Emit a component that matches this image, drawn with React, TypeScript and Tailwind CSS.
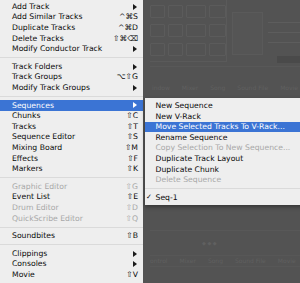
import React from "react";

type Item =
  | { label: string; sc?: string; arrow?: boolean; disabled?: boolean; hl?: boolean; check?: boolean }
  | "sep";

const mainItems: Item[] = [
  { label: "Add Track", arrow: true },
  { label: "Add Similar Tracks", sc: "^⌘S" },
  { label: "Duplicate Tracks", sc: "^⌘D" },
  { label: "Delete Tracks", sc: "⇧⌘⌫" },
  { label: "Modify Conductor Track", arrow: true },
  "sep",
  { label: "Track Folders", arrow: true },
  { label: "Track Groups", sc: "⌥⇧G" },
  { label: "Modify Track Groups", arrow: true },
  "sep",
  { label: "Sequences", arrow: true, hl: true },
  { label: "Chunks", sc: "⇧C" },
  { label: "Tracks", sc: "⇧T" },
  { label: "Sequence Editor", sc: "⇧S" },
  { label: "Mixing Board", sc: "⇧M" },
  { label: "Effects", sc: "⇧F" },
  { label: "Markers", sc: "⇧K" },
  "sep",
  { label: "Graphic Editor", sc: "⇧G", disabled: true },
  { label: "Event List", sc: "⇧E" },
  { label: "Drum Editor", sc: "⇧D", disabled: true },
  { label: "QuickScribe Editor", sc: "⇧Q", disabled: true },
  "sep",
  { label: "Soundbites", sc: "⇧B" },
  "sep",
  { label: "Clippings", arrow: true },
  { label: "Consoles", arrow: true },
  { label: "Movie", sc: "⇧V" },
];

const subItems: Item[] = [
  { label: "New Sequence" },
  { label: "New V-Rack" },
  { label: "Move Selected Tracks To V-Rack...", hl: true },
  { label: "Rename Sequence" },
  { label: "Copy Selection To New Sequence...", disabled: true },
  { label: "Duplicate Track Layout" },
  { label: "Duplicate Chunk" },
  { label: "Delete Sequence", disabled: true },
  "sep",
  { label: "Seq-1", check: true },
];

function Arrow({ white }: { white?: boolean }) {
  return (
    <svg width="4" height="6" viewBox="0 0 4 6" className="mr-[1px]">
      <path d="M0 0 L4 3 L0 6 Z" fill={white ? "#ffffff" : "#1a1a1a"} />
    </svg>
  );
}

function Sep() {
  return (
    <div className="h-[7px] flex items-center">
      <div className="h-px w-full bg-[#dadada]" />
    </div>
  );
}

function MainRow({ it }: { it: Exclude<Item, "sep"> }) {
  const color = it.hl ? "text-white" : it.disabled ? "text-[#a8a8a8]" : "text-[#0a0a0a]";
  return (
    <div
      className={`h-[10.6px] flex items-center justify-between pl-[12px] pr-[5px] ${
        it.hl ? "bg-[#3b74d4]" : ""
      } ${color}`}
    >
      <span className="whitespace-nowrap">{it.label}</span>
      {it.sc && <span className="whitespace-nowrap">{it.sc}</span>}
      {it.arrow && <Arrow white={it.hl} />}
    </div>
  );
}

function SubRow({ it }: { it: Exclude<Item, "sep"> }) {
  const color = it.hl ? "text-white" : it.disabled ? "text-[#a8a8a8]" : "text-[#0a0a0a]";
  return (
    <div className={`h-[10.6px] flex items-center ${it.hl ? "bg-[#3b74d4]" : ""} ${color}`}>
      <span className="w-[10.5px] pl-[1px] text-[7px]">{it.check ? "✓" : ""}</span>
      <span className="whitespace-nowrap">{it.label}</span>
    </div>
  );
}

function Cell({ w }: { w: string }) {
  return <div className={`${w} h-[13px] border border-[#5b5b5b] rounded-[1px]`} />;
}

export default function App() {
  return (
    <div className="relative w-[300px] h-[283px] overflow-hidden bg-[#535353] font-['DejaVu_Sans',sans-serif] text-[7.7px] leading-none">
      {/* background application window (faint) */}
      <div className="flex flex-col pl-[150px] h-full">
        <div className="flex h-[64px] gap-[5px]">
          <div className="w-[77px] h-[62px] border-r border-b border-[#5a5a5a] flex flex-col gap-[6px] pt-[5px]">
            <div className="flex gap-[3px]"><Cell w="w-[15px]" /><Cell w="w-[15px]" /><Cell w="w-[20px]" /><Cell w="w-[17px]" /></div>
            <div className="flex gap-[3px]"><Cell w="w-[15px]" /><Cell w="w-[15px]" /><Cell w="w-[20px]" /><Cell w="w-[17px]" /></div>
            <div className="flex gap-[3px]"><Cell w="w-[15px]" /><Cell w="w-[15px]" /><Cell w="w-[20px]" /><Cell w="w-[17px]" /></div>
          </div>
          <div className="w-[31px] h-[43px] mt-[12px] border border-[#5a5a5a] bg-[#555555]" />
          <div className="flex-1 flex flex-col pt-[22px] gap-[9px]">
            <div className="h-px bg-[#5d5d5d]" />
            <div className="h-px bg-[#5d5d5d]" />
            <div className="h-px bg-[#5d5d5d]" />
            <div className="ml-[9px] mt-[4px] h-[7px] bg-[#4a4a4a]" />
          </div>
        </div>
        <div className="h-px bg-[#585858] mt-[2px]" />
        <div className="flex gap-[12px] mt-[17px] h-[8px] items-center text-[#606060] text-[6px] pl-[2px]">
          <span>indow</span><span>Mixer</span><span>Song</span><span>Sound File</span><span>Movie</span>
        </div>
        <div className="flex-1" />
        <div className="h-[25px] border-t border-[#585858] flex items-center pl-[52px] text-[#606060] text-[5px]">◆ ◆ ◆</div>
        <div className="flex gap-[12px] h-[12px] items-center text-[#606060] text-[6px] border-y border-[#575757]">
          <span>ontrol</span><span>Mixer</span><span>Song</span><span>Sound File</span><span>Movie</span>
        </div>
        <div className="h-[16px]" />
      </div>

      {/* main menu */}
      <div className="absolute left-0 top-0 w-[143px] h-[283px] bg-[#eeeeee] pt-[1.4px]">
        {mainItems.map((it, i) => (it === "sep" ? <Sep key={i} /> : <MainRow key={i} it={it} />))}
      </div>

      {/* submenu */}
      <div className="absolute left-[145px] top-[97.5px] w-[170px] bg-[#eeeeee] pt-[3px] pb-[2.5px] shadow-[0_2px_4px_rgba(0,0,0,0.35)]">
        {subItems.map((it, i) => (it === "sep" ? <Sep key={i} /> : <SubRow key={i} it={it} />))}
      </div>
    </div>
  );
}
